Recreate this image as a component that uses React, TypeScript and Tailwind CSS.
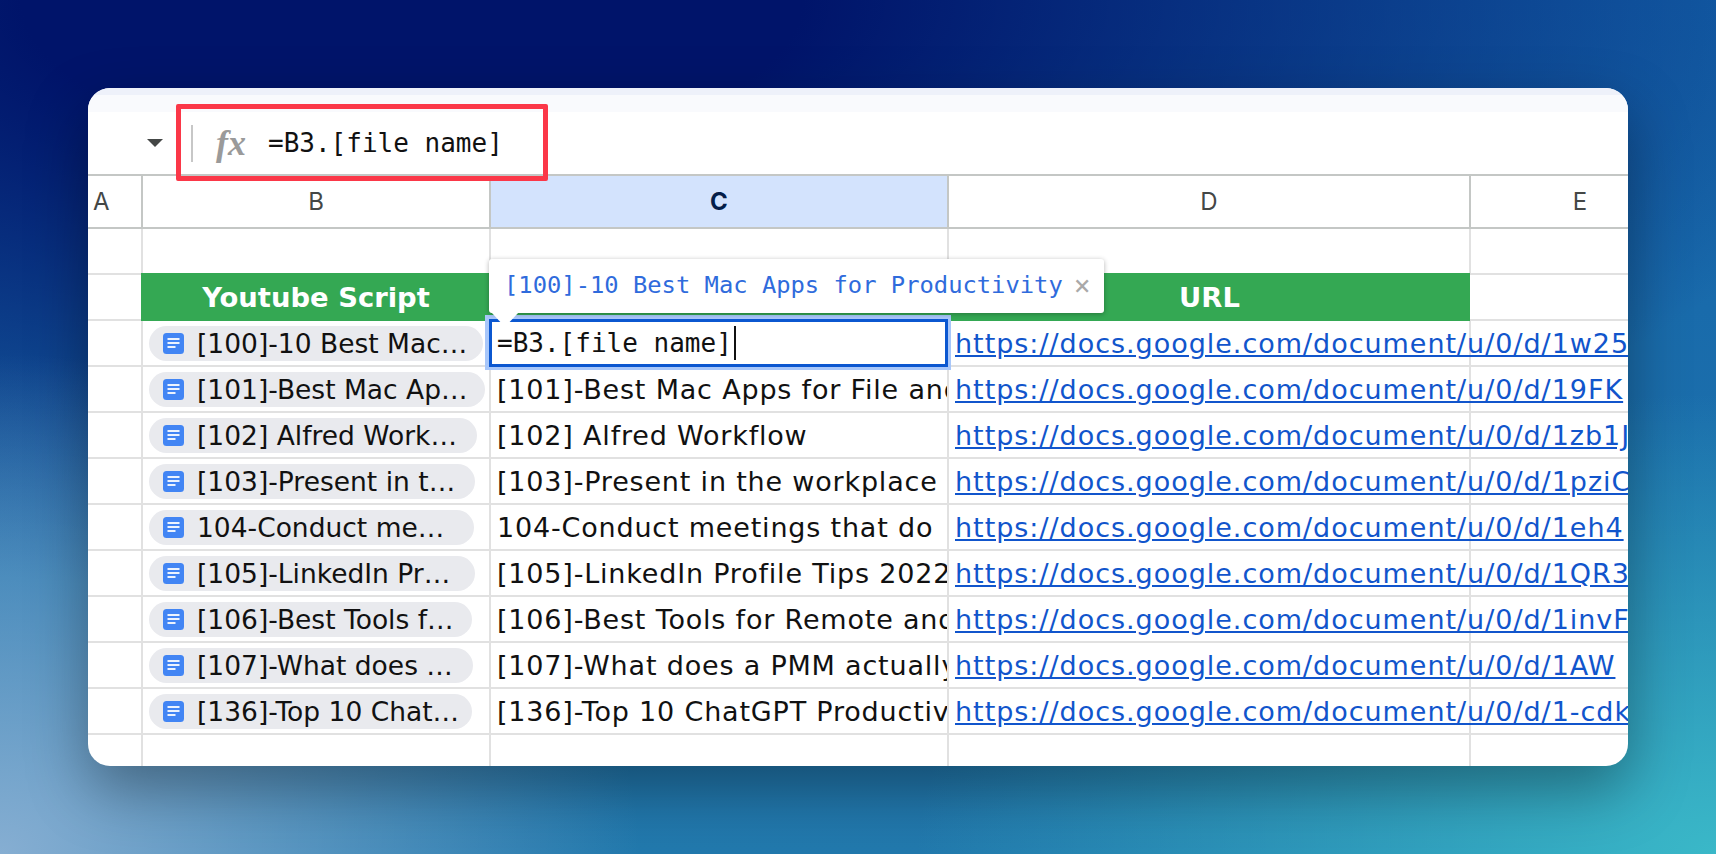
const rows = [
  { chip: "[100]-10 Best Mac…", w: "w-[334px]", title: "", url: "https://docs.google.com/document/u/0/d/1w25" },
  { chip: "[101]-Best Mac Ap…", w: "w-[336px]", title: "[101]-Best Mac Apps for File and", url: "https://docs.google.com/document/u/0/d/19FK" },
  { chip: "[102] Alfred Work…", w: "w-[328px]", title: "[102] Alfred Workflow", url: "https://docs.google.com/document/u/0/d/1zb1J" },
  { chip: "[103]-Present in t…", w: "w-[326px]", title: "[103]-Present in the workplace", url: "https://docs.google.com/document/u/0/d/1pziC" },
  { chip: "104-Conduct me…", w: "w-[325px]", title: "104-Conduct meetings that do", url: "https://docs.google.com/document/u/0/d/1eh4" },
  { chip: "[105]-LinkedIn Pr…", w: "w-[326px]", title: "[105]-LinkedIn Profile Tips 2022", url: "https://docs.google.com/document/u/0/d/1QR3" },
  { chip: "[106]-Best Tools f…", w: "w-[323px]", title: "[106]-Best Tools for Remote and", url: "https://docs.google.com/document/u/0/d/1invF" },
  { chip: "[107]-What does …", w: "w-[324px]", title: "[107]-What does a PMM actually", url: "https://docs.google.com/document/u/0/d/1AW" },
  { chip: "[136]-Top 10 Chat…", w: "w-[323px]", title: "[136]-Top 10 ChatGPT Productivity", url: "https://docs.google.com/document/u/0/d/1-cdk" },
];

const cols = "grid grid-cols-[55px_348px_458px_522px_220px] w-[1603px]";
const mainFont = "font-['DejaVu_Sans','Liberation_Sans',sans-serif]";
const headFont = "font-['Inter','Liberation_Sans',sans-serif]";
const monoFont = "font-['DejaVu_Sans_Mono',monospace]";

function DocIcon() {
  return (
    <svg width="21" height="21" viewBox="0 0 21 21" className="shrink-0">
      <rect width="21" height="21" rx="3.5" fill="#4285f4" />
      <rect x="4.5" y="5" width="12" height="2" fill="#fff" opacity="0.9" />
      <rect x="4.5" y="9" width="12" height="2" fill="#fff" opacity="0.9" />
      <rect x="4.5" y="13" width="8" height="2" fill="#fff" opacity="0.9" />
    </svg>
  );
}

function HeaderCell({ label, active }: { label: string; active?: boolean }) {
  return (
    <div
      className={
        active
          ? `flex items-center justify-center border-r-2 border-b-2 border-[#c4c7c5] bg-[#d3e3fd] text-[24px] font-bold text-[#041e49] ${headFont}`
          : `flex items-center justify-center border-r-2 border-b-2 border-[#c4c7c5] text-[24px] text-[#444746] ${headFont}`
      }
    >
      {label}
    </div>
  );
}

export default function App() {
  return (
    <div className="flex h-[854px] w-[1716px] items-start overflow-hidden bg-[radial-gradient(ellipse_800px_460px_at_100%_100%,#3ab8c8_0%,rgba(58,184,200,0)_100%),radial-gradient(ellipse_640px_500px_at_0%_100%,#86aed2_0%,rgba(134,174,210,0)_100%),radial-gradient(ellipse_1500px_600px_at_24%_0%,#00146a_0%,#00146a_26%,rgba(0,20,106,0)_100%),linear-gradient(180deg,#1463aa_0%,#2279ad_100%)] pt-[88px] pl-[88px]">
      <div className={`relative h-[678px] w-[1540px] overflow-hidden rounded-[22px] bg-white shadow-[0_24px_60px_rgba(0,0,0,0.35)] ${mainFont}`}>
        <div className="h-[7px] bg-[#eef1fa]" />
        <div className="h-[17px] bg-[#f9fafd]" />

        {/* formula bar */}
        <div className="flex h-[62px] items-center pl-[59px]">
          <div className="h-0 w-0 border-x-[8.5px] border-t-[8px] border-x-transparent border-t-[#444746]" />
          <div className="ml-[28px] h-[37px] w-[2px] bg-[#c7c7c7]" />
          <span className="ml-[23px] w-[52px] font-['Liberation_Serif',serif] text-[36px] font-bold italic leading-none text-[#9a9a9a]">
            fx
          </span>
          <span className={`text-[26px] text-[#111111] ${monoFont}`}>=B3.[file name]</span>
        </div>
        <div className="absolute top-[16px] left-[88px] h-[77px] w-[372px] rounded-[2px] border-[5px] border-[#fb3748]" />

        {/* column letters */}
        <div className={`${cols} h-[55px] border-t-2 border-[#c4c7c5]`}>
          <div className={`flex items-center border-r-2 border-b-2 border-[#c4c7c5] pl-[5px] text-[24px] text-[#444746] ${headFont}`}>A</div>
          <HeaderCell label="B" />
          <HeaderCell label="C" active />
          <HeaderCell label="D" />
          <HeaderCell label="E" />
        </div>

        {/* empty row */}
        <div className={`${cols} h-[44px]`}>
          <div className="border-r-2 border-[#e1e1e1]" />
          <div className="border-r-2 border-[#e1e1e1]" />
          <div className="border-r-2 border-[#e1e1e1]" />
          <div className="border-r-2 border-[#e1e1e1]" />
          <div />
        </div>

        {/* green title row */}
        <div className="grid h-[48px] w-[1603px] grid-cols-[53px_350px_458px_521px_221px]">
          <div className="border-y-2 border-[#e1e1e1]" />
          <div className="flex items-center justify-center bg-[#34a853] pt-[2px] text-[27.4px] font-bold text-white">Youtube Script</div>
          <div className="bg-[#34a853]" />
          <div className="flex items-center justify-center bg-[#34a853] pt-[2px] text-[27.4px] font-bold text-white">URL</div>
          <div className="border-y-2 border-[#e1e1e1]" />
        </div>

        {rows.map((row, i) => (
          <div key={row.url} className={`${cols} h-[46px]`}>
            <div className="border-r-2 border-b-2 border-[#e1e1e1]" />
            <div className="flex items-center border-r-2 border-b-2 border-[#e1e1e1] pl-[6px]">
              <div className={`flex h-[35px] items-center gap-[13px] rounded-full bg-[#e9eaee] pl-[14px] ${row.w}`}>
                <DocIcon />
                <span className="whitespace-nowrap pt-[2px] text-[26.5px] text-[#111111]">{row.chip}</span>
              </div>
            </div>
            <div className="relative flex items-center border-r-2 border-b-2 border-[#e1e1e1] pl-[6px]">
              {i === 0 ? (
                <>
                  <div className="absolute -top-[6px] -left-[6px] z-10 h-[55px] w-[466px] border-[4px] border-[#a8c7fa]" />
                  <div className={`absolute -top-[2px] -left-[2px] z-10 flex h-[48px] w-[459px] items-center border-[3px] border-[#0b57d0] bg-white pl-[5px] text-[26px] text-[#111111] ${monoFont}`}>
                    =B3.[file name]
                    <span className="ml-[2px] h-[34px] w-[2px] bg-[#111111]" />
                  </div>
                  <div className={`absolute -top-[62px] -left-[2px] z-20 flex h-[54px] w-[615px] items-center rounded-[3px] bg-white pl-[15px] text-[23.8px] text-[#2f6bdc] shadow-[0_1px_5px_rgba(0,0,0,0.3)] ${monoFont}`}>
                    [100]-10 Best Mac Apps for Productivity
                    <span className="ml-[11px] text-[28px] text-[#a9a9a9]">×</span>
                  </div>
                  <div className="absolute -top-[9px] left-[0px] z-20 h-0 w-0 border-x-[14px] border-t-[15px] border-x-transparent border-t-white" />
                </>
              ) : (
                <span className="overflow-hidden whitespace-nowrap pt-[2px] text-[27px] tracking-[0.03em] text-[#111111]">{row.title}</span>
              )}
            </div>
            <div className="flex items-center border-r-2 border-b-2 border-[#e1e1e1] pl-[6px]">
              <a className="whitespace-nowrap pt-[2px] text-[27px] tracking-[0.036em] text-[#1155cc] underline">{row.url}</a>
            </div>
            <div className="border-b-2 border-[#e1e1e1]" />
          </div>
        ))}

        {/* trailing row */}
        <div className={`${cols} h-[31px]`}>
          <div className="border-r-2 border-[#e1e1e1]" />
          <div className="border-r-2 border-[#e1e1e1]" />
          <div className="border-r-2 border-[#e1e1e1]" />
          <div className="border-r-2 border-[#e1e1e1]" />
          <div />
        </div>
      </div>
    </div>
  );
}
